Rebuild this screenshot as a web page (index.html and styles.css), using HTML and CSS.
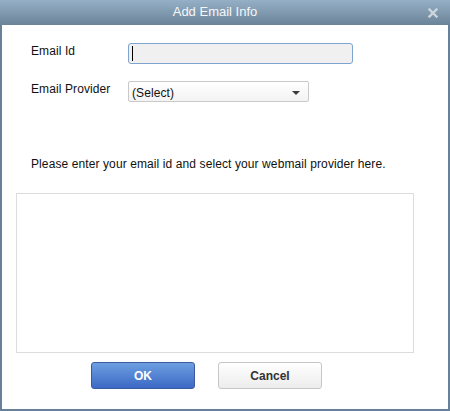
FILE: index.html
```html
<!DOCTYPE html>
<html>
<head>
<meta charset="utf-8">
<link rel="stylesheet" href="styles.css">
</head>
<body>
<div class="dialog">
  <div class="titlebar">
    <span class="title">Add Email Info</span>
    <svg class="close" width="10" height="10" viewBox="0 0 10 10"><path d="M1.5 1.5 L8.5 8.5 M8.5 1.5 L1.5 8.5" stroke="#cdd5dc" stroke-width="2.4" stroke-linecap="square"/></svg>
  </div>
  <div class="content">
    <div class="form">
      <div class="label">Email Id</div>
      <div class="input"><span class="caret"></span></div>
      <div class="label">Email Provider</div>
      <div class="select"><span>(Select)</span><span class="arrow"></span></div>
    </div>
    <p class="info">Please enter your email id and select your webmail provider here.</p>
    <div class="box"></div>
    <div class="buttons">
      <div class="btn ok">OK</div>
      <div class="btn cancel">Cancel</div>
    </div>
  </div>
</div>
</body>
</html>
```
FILE: styles.css
```css
html, body { margin: 0; padding: 0; }
body {
  width: 450px;
  height: 411px;
  font-family: "Liberation Sans", Arial, sans-serif;
  font-size: 12px;
  line-height: 14px;
  letter-spacing: 0.1px;
  color: #111;
  background: #fff;
}
.dialog {
  width: 450px;
  height: 411px;
  box-sizing: border-box;
  border: 2px solid #67819a;
  border-top: none;
  display: flex;
  flex-direction: column;
  background: #fff;
}
.titlebar {
  height: 25px;
  margin: 0 -2px;
  padding-right: 20px;
  background: linear-gradient(#95b0c6, #6b8399);
  display: flex;
  align-items: center;
  justify-content: center;
  position: relative;
}
.title {
  color: #f5f7f9;
  font-size: 13px;
  line-height: 16px;
  letter-spacing: 0;
  margin-top: -1px;
}
.close {
  position: absolute;
  right: 12px;
  top: 8px;
}
.content {
  display: flex;
  flex-direction: column;
}
.form {
  display: grid;
  grid-template-columns: 97px 225px;
  row-gap: 17px;
  margin: 18px 0 0 29px;
  align-items: start;
}
.label {
  margin-top: 1px;
}
.input {
  height: 21px;
  box-sizing: border-box;
  border: 1px solid #7ea3cf;
  border-radius: 3px;
  background: #f0f0f0;
  padding: 2px 0 0 3px;
}
.caret {
  display: block;
  width: 1px;
  height: 15px;
  background: #000;
}
.select {
  width: 181px;
  height: 21px;
  box-sizing: border-box;
  border: 1px solid #c9c9c9;
  border-radius: 2px;
  background: linear-gradient(#ffffff, #f3f3f3);
  padding: 4px 8px 0 3px;
  display: flex;
  justify-content: space-between;
}
.arrow {
  width: 0;
  height: 0;
  border-left: 4px solid transparent;
  border-right: 4px solid transparent;
  border-top: 4px solid #3c3c3c;
  margin-top: 5px;
}
.info {
  margin: 55px 0 0 29px;
}
.box {
  margin: 22px 0 0 14px;
  width: 398px;
  height: 160px;
  box-sizing: border-box;
  border: 1px solid #dcdcdc;
}
.buttons {
  display: flex;
  gap: 23px;
  margin: 9px 0 0 89px;
}
.btn {
  width: 104px;
  height: 27px;
  box-sizing: border-box;
  border-radius: 3px;
  font-weight: bold;
  letter-spacing: 0;
  display: flex;
  align-items: center;
  justify-content: center;
}
.ok {
  background: linear-gradient(#6d9fe0, #3c69c5);
  border: 1px solid #3a5c9f;
  color: #fff;
}
.cancel {
  background: linear-gradient(#ffffff, #ececec);
  border: 1px solid #c6c6c6;
  color: #333;
}
```
